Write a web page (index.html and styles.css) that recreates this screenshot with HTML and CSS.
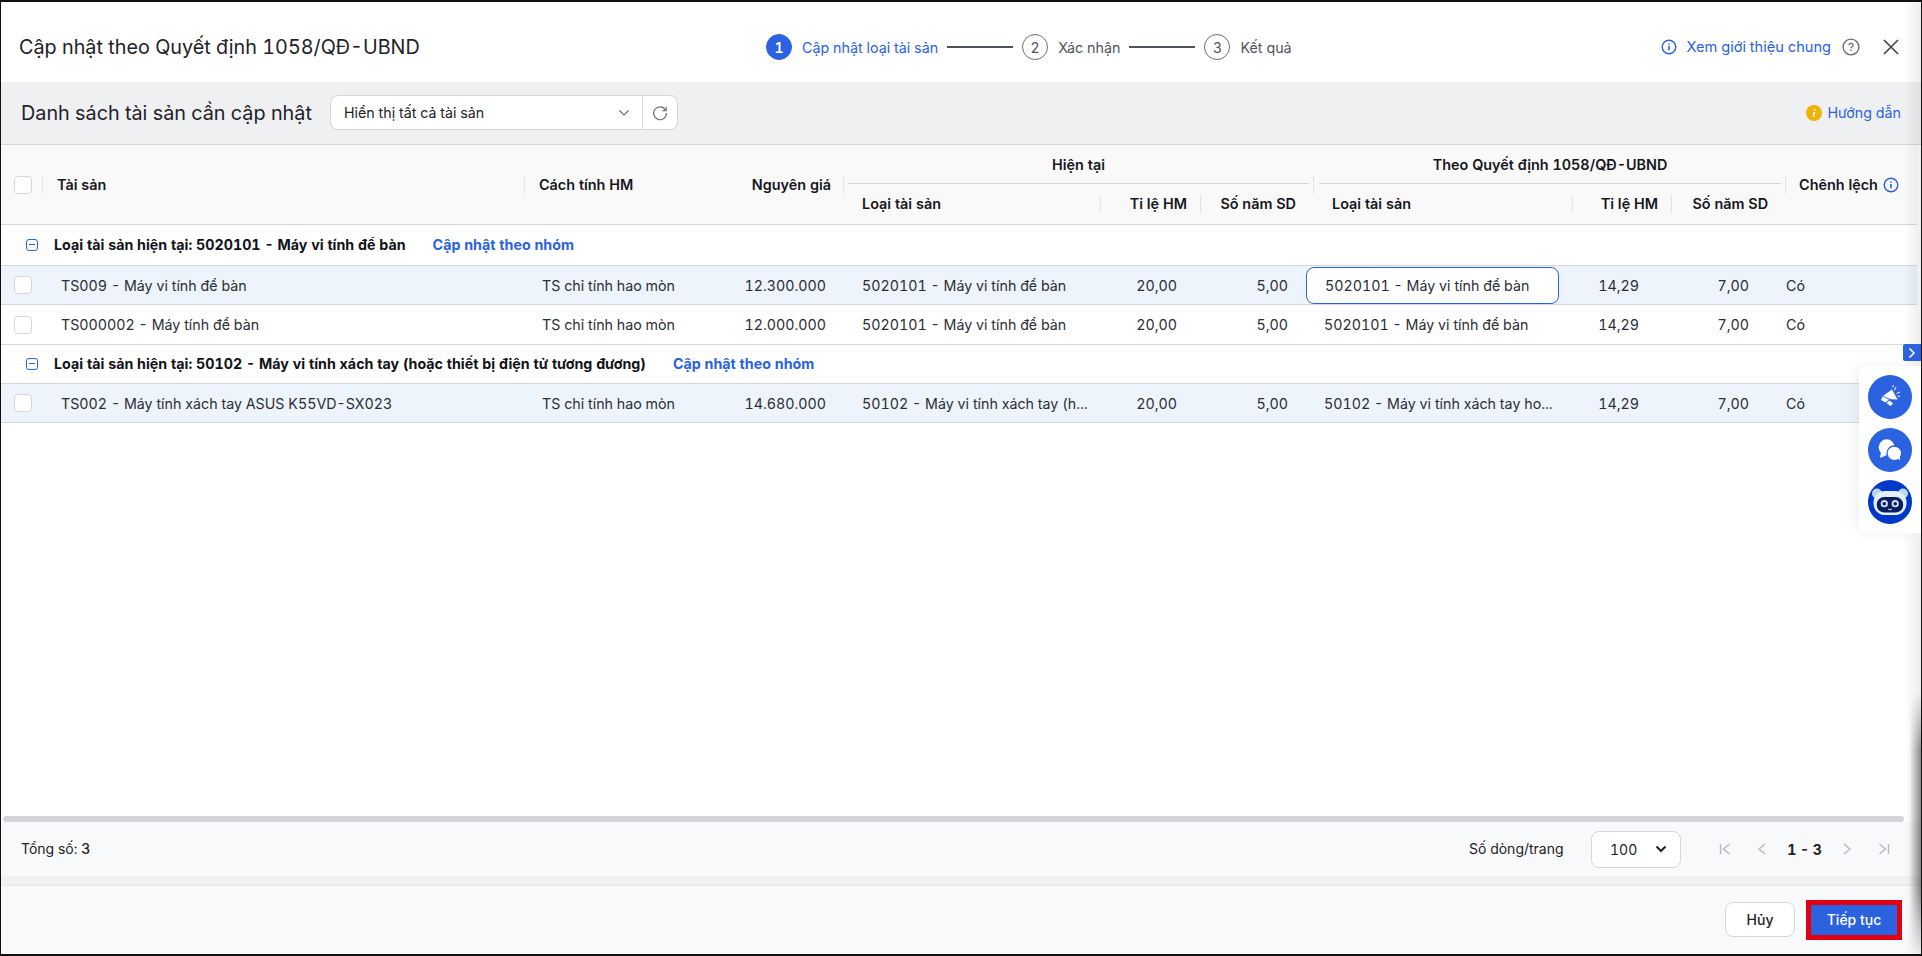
FILE: index.html
```html
<!DOCTYPE html>
<html lang="vi">

<head>
    <meta charset="UTF-8">
    <meta name="viewport" content="width=device-width, initial-scale=1.0">
    <title>Cập nhật theo Quyết định 1058/QĐ-UBND</title>
    <link rel="stylesheet" href="styles.css">
</head>

<body>
    <div id="dialog">
        <header class="top-bar">
            <h1>Cập nhật theo Quyết định 1058/QĐ-UBND</h1>
            <div class="steps">
                <span class="step-num active">1</span>
                <span class="step-name active">Cập nhật loại tài sản</span>
                <span class="step-line"></span>
                <span class="step-num">2</span>
                <span class="step-name">Xác nhận</span>
                <span class="step-line"></span>
                <span class="step-num">3</span>
                <span class="step-name">Kết quả</span>
            </div>
            <div class="top-links">
                <svg class="ico-info" viewBox="0 0 16 16" width="16" height="16"><circle cx="8" cy="8" r="6.8" fill="none" stroke="#2a62e0" stroke-width="1.4"/><path d="M8 7v4.2M8 4.4v1.3" stroke="#2a62e0" stroke-width="1.6"/></svg>
                <a class="link">Xem giới thiệu chung</a>
                <svg class="ico-help" viewBox="0 0 18 18" width="18" height="18"><circle cx="9" cy="9" r="7.9" fill="none" stroke="#6b7078" stroke-width="1.4"/><path d="M6.9 7.3c0-1.3 1-2 2.1-2s2.1.7 2.1 1.9c0 1.5-2.1 1.6-2.1 3" fill="none" stroke="#6b7078" stroke-width="1.3"/><path d="M9 11.6v1.4" stroke="#6b7078" stroke-width="1.4"/></svg>
                <svg class="ico-close" viewBox="0 0 16 16" width="16" height="16"><path d="M1 1l14 14M15 1L1 15" stroke="#43474e" stroke-width="1.7"/></svg>
            </div>
        </header>

        <div class="toolbar">
            <h2>Danh sách tài sản cần cập nhật</h2>
            <div class="filter">
                <span class="filter-text">Hiển thị tất cả tài sản</span>
                <svg viewBox="0 0 12 8" width="12" height="8"><path d="M1.5 1.5L6 6l4.5-4.5" fill="none" stroke="#6b7078" stroke-width="1.2"/></svg>
                <span class="filter-reload">
                    <svg viewBox="0 0 18 18" width="18" height="18"><path d="M14.6 6.2A6.4 6.4 0 1 0 15.4 9" fill="none" stroke="#6b7078" stroke-width="1.2"/><path d="M15.2 2.8v3.8h-3.8" fill="none" stroke="#6b7078" stroke-width="1.2"/></svg>
                </span>
            </div>
            <div class="guide">
                <svg viewBox="0 0 16 16" width="16" height="16"><circle cx="8" cy="8" r="8" fill="#eeb308"/><path d="M8.4 7l-.8 4.6M8.7 4v1.6" stroke="#fff" stroke-width="1.6"/></svg>
                <a class="link">Hướng dẫn</a>
            </div>
        </div>

        <div class="table-wrap">
            <table>
                <colgroup>
                    <col class="c-check"><col class="c-name"><col class="c-method"><col class="c-price">
                    <col class="c-type1"><col class="c-rate1"><col class="c-year1">
                    <col class="c-type2"><col class="c-rate2"><col class="c-year2"><col class="c-diff">
                </colgroup>
                <thead>
                    <tr class="head-1">
                        <th rowspan="2" class="th-check"><span class="check"></span></th>
                        <th rowspan="2" class="th-name"><span class="th-mid">Tài sản</span></th>
                        <th rowspan="2" class="th-method"><span class="th-mid">Cách tính HM</span></th>
                        <th rowspan="2" class="th-price"><span class="th-mid">Nguyên giá</span></th>
                        <th colspan="3" class="th-group"><span>Hiện tại</span></th>
                        <th colspan="3" class="th-group th-group-2"><span>Theo Quyết định 1058/QĐ-UBND</span></th>
                        <th rowspan="2" class="th-diff"><span class="th-mid">Chênh lệch
                            <svg viewBox="0 0 16 16" width="16" height="16"><circle cx="8" cy="8" r="6.8" fill="none" stroke="#2a62e0" stroke-width="1.4"/><path d="M8 7v4.2M8 4.4v1.3" stroke="#2a62e0" stroke-width="1.6"/></svg>
                        </span></th>
                    </tr>
                    <tr class="head-2">
                        <th class="th-type1"><span>Loại tài sản</span></th>
                        <th class="num"><span>Tỉ lệ HM</span></th>
                        <th class="num num-year"><span>Số năm SD</span></th>
                        <th class="th-type2"><span>Loại tài sản</span></th>
                        <th class="num"><span>Tỉ lệ HM</span></th>
                        <th class="num num-year"><span>Số năm SD</span></th>
                    </tr>
                </thead>
                <tbody>
                    <tr class="group">
                        <td colspan="11">
                            <span class="minus"></span><b>Loại tài sản hiện tại: 5020101 - Máy vi tính để bàn</b><a class="link group-link">Cập nhật theo nhóm</a>
                        </td>
                    </tr>
                    <tr class="row selected">
                        <td class="td-check"><span class="check"></span></td>
                        <td class="td-name">TS009 - Máy vi tính để bàn</td>
                        <td class="td-method">TS chỉ tính hao mòn</td>
                        <td class="td-price">12.300.000</td>
                        <td class="td-type1">5020101 - Máy vi tính để bàn</td>
                        <td class="td-rate1">20,00</td>
                        <td class="td-year1">5,00</td>
                        <td class="td-type2"><div class="cell-input">5020101 - Máy vi tính để bàn</div></td>
                        <td class="td-rate2">14,29</td>
                        <td class="td-year2">7,00</td>
                        <td class="td-diff">Có</td>
                    </tr>
                    <tr class="row row-tall">
                        <td class="td-check"><span class="check"></span></td>
                        <td class="td-name">TS000002 - Máy tính để bàn</td>
                        <td class="td-method">TS chỉ tính hao mòn</td>
                        <td class="td-price">12.000.000</td>
                        <td class="td-type1">5020101 - Máy vi tính để bàn</td>
                        <td class="td-rate1">20,00</td>
                        <td class="td-year1">5,00</td>
                        <td class="td-type2">5020101 - Máy vi tính để bàn</td>
                        <td class="td-rate2">14,29</td>
                        <td class="td-year2">7,00</td>
                        <td class="td-diff">Có</td>
                    </tr>
                    <tr class="group group-2">
                        <td colspan="11">
                            <span class="minus"></span><b>Loại tài sản hiện tại: 50102 - Máy vi tính xách tay (hoặc thiết bị điện tử tương đương)</b><a class="link group-link">Cập nhật theo nhóm</a>
                        </td>
                    </tr>
                    <tr class="row selected">
                        <td class="td-check"><span class="check"></span></td>
                        <td class="td-name">TS002 - Máy tính xách tay ASUS K55VD-SX023</td>
                        <td class="td-method">TS chỉ tính hao mòn</td>
                        <td class="td-price">14.680.000</td>
                        <td class="td-type1">50102 - Máy vi tính xách tay (h...</td>
                        <td class="td-rate1">20,00</td>
                        <td class="td-year1">5,00</td>
                        <td class="td-type2">50102 - Máy vi tính xách tay ho...</td>
                        <td class="td-rate2">14,29</td>
                        <td class="td-year2">7,00</td>
                        <td class="td-diff">Có</td>
                    </tr>
                </tbody>
            </table>
            <div class="scrollbar"></div>
        </div>

        <div class="pager-bar">
            <div class="total">Tổng số: <span>3</span></div>
            <div class="per-page">Số dòng/trang</div>
            <div class="page-select">100
                <svg viewBox="0 0 12 8" width="12" height="8"><path d="M1.5 1.5L6 6l4.5-4.5" fill="none" stroke="#1f2229" stroke-width="2"/></svg>
            </div>
            <div class="pager">
                <svg viewBox="0 0 12 14" width="12" height="14"><path d="M1.5 2v10M10.5 2l-6 5 6 5" fill="none" stroke="#b5b9c0" stroke-width="1.4"/></svg>
                <svg viewBox="0 0 12 14" width="12" height="14"><path d="M9 2L3 7l6 5" fill="none" stroke="#b5b9c0" stroke-width="1.4"/></svg>
                <b>1 - 3</b>
                <svg viewBox="0 0 12 14" width="12" height="14"><path d="M3 2l6 5-6 5" fill="none" stroke="#b5b9c0" stroke-width="1.4"/></svg>
                <svg viewBox="0 0 12 14" width="12" height="14"><path d="M10.5 2v10M1.5 2l6 5-6 5" fill="none" stroke="#b5b9c0" stroke-width="1.4"/></svg>
            </div>
        </div>

        <footer class="actions">
            <button class="btn-cancel">Hủy</button>
            <button class="btn-next">Tiếp tục</button>
        </footer>

        <div class="edge-shadow"></div>
        <div class="edge-dark"></div>

        <div class="side-toggle">
            <svg viewBox="0 0 10 12" width="10" height="12"><path d="M2.5 1.5L7 6l-4.5 4.5" fill="none" stroke="#fff" stroke-width="1.6"/></svg>
        </div>
        <div class="side-panel">
            <span class="side-btn">
                <svg viewBox="0 0 44 44" width="44" height="44">
                    <path d="M24 14.500L29.500 24.500 23 24.300 15 21z" fill="#fff"/>
                    <path d="M14.500 21.500l6.500 3-3.500 3-4.500-2.500z" fill="#fff"/>
                    <path d="M18.500 28l3-2.500 3.500 3-2.500 2.500z" fill="#fff"/>
                    <path d="M26.500 15.500l1.500-3.500M28.500 18.500l3.500-1.500M25 12.500l.3-2.500M29.500 21l2.500.3" stroke="#fff" stroke-width="1"/>
                </svg>
            </span>
            <span class="side-btn">
                <svg viewBox="0 0 44 44" width="44" height="44">
                    <circle cx="18.700" cy="19.300" r="8" fill="#fff"/>
                    <path d="M13 24l-1 6 6-2.500z" fill="#fff"/>
                    <circle cx="26.300" cy="25.300" r="7.300" fill="#fff" stroke="#2a62e0" stroke-width="1.300"/>
                    <path d="M29 30l3 2.500-.4-5z" fill="#fff"/>
                </svg>
            </span>
            <span class="side-btn robot">
                <svg viewBox="0 0 44 44" width="44" height="44">
                    <circle cx="9" cy="13.500" r="5" fill="#bcd6f2"/>
                    <circle cx="35" cy="13.500" r="5" fill="#bcd6f2"/>
                    <rect x="5.500" y="11" width="33" height="24" rx="11.500" fill="#e4eefb"/>
                    <rect x="8.700" y="17" width="26.500" height="15.500" rx="7.700" fill="#0b1c63"/>
                    <circle cx="16.300" cy="23.700" r="3.600" fill="#cfe0f5"/>
                    <circle cx="27.200" cy="23.700" r="3.600" fill="#cfe0f5"/>
                    <circle cx="16.300" cy="23.700" r="1.800" fill="#0b1c63"/>
                    <circle cx="27.200" cy="23.700" r="1.800" fill="#0b1c63"/>
                    <path d="M20 29q2 1.500 4 0" fill="none" stroke="#cfe0f5" stroke-width="1"/>
                </svg>
            </span>
        </div>
    </div>
</body>

</html>
```

FILE: styles.css
```css
* {
    padding: 0;
    margin: 0;
    box-sizing: border-box;
}

html,
body {
    height: 100%;
    overflow: hidden;
}

body {
    font-family: Inter, "Noto Sans", sans-serif;
    font-size: 14px;
    font-variant-numeric: tabular-nums;
    color: #1f2229;
    background-color: #fff;
}

.link {
    color: #2a62e0;
}

#dialog {
    position: relative;
    display: flex;
    flex-direction: column;
    height: 956px;
    border-top: 2px solid #111;
    border-left: 1px solid #111;
    border-right: 1px solid #111;
    border-bottom: 2px solid #111;
    overflow: hidden;
}

/* top bar */
.top-bar {
    display: flex;
    align-items: center;
    height: 80px;
    padding: 10px 22px 0 18px;
    flex-shrink: 0;
}

h1 {
    width: 747px;
    font-size: 19.8px;
    font-weight: 400;
}

.steps {
    display: flex;
    align-items: center;
}

.step-num {
    display: flex;
    justify-content: center;
    align-items: center;
    width: 26px;
    height: 26px;
    border: 1px solid #6b7078;
    border-radius: 50%;
    color: #50545c;
    font-size: 14px;
}

.step-num.active {
    background-color: #2a62e0;
    border-color: #2a62e0;
    color: #fff;
    font-weight: 600;
}

.step-name {
    margin-left: 10px;
    color: #50545c;
    font-size: 14.3px;
}

.step-name.active {
    color: #2a62e0;
}

.step-line {
    width: 66px;
    height: 2px;
    margin: 0 9px;
    background-color: #50545c;
}

.top-links {
    display: flex;
    align-items: center;
    margin-left: auto;
}

.top-links .link {
    margin-left: 9px;
    font-size: 14.6px;
}

.ico-help {
    margin-left: 11px;
}

.ico-close {
    margin-left: 23px;
}

/* toolbar */
.toolbar {
    display: flex;
    align-items: center;
    height: 63px;
    padding: 0 20px 1px 20px;
    background-color: #eff0f2;
    border-bottom: 1px solid #d5d7db;
    flex-shrink: 0;
}

h2 {
    width: 309px;
    font-size: 19.8px;
    font-weight: 400;
}

.filter {
    display: flex;
    align-items: center;
    width: 348px;
    height: 35px;
    padding-left: 13px;
    background-color: #fff;
    border: 1px solid #d5d7db;
    border-radius: 8px;
    font-size: 14.25px;
}

.filter-text {
    width: 274px;
}

.filter-reload {
    display: flex;
    justify-content: center;
    align-items: center;
    width: 35px;
    height: 33px;
    margin-left: 12px;
    border-left: 1px solid #d5d7db;
}

.guide {
    display: flex;
    align-items: center;
    gap: 5px;
    margin-left: auto;
    font-size: 14.25px;
}

/* table */
.table-wrap {
    flex: 1;
    position: relative;
    background-color: #fff;
}

table {
    width: 1916px;
    table-layout: fixed;
    border-collapse: separate;
    border-spacing: 0;
}

.c-check { width: 41px; }
.c-name { width: 482px; }
.c-method { width: 176px; }
.c-price { width: 144px; }
.c-type1 { width: 256px; }
.c-rate1 { width: 100px; }
.c-year1 { width: 113px; }
.c-type2 { width: 259px; }
.c-rate2 { width: 99px; }
.c-year2 { width: 114px; }
.c-diff { width: 132px; }

thead {
    background-color: #f9f9fa;
}

th {
    position: relative;
    font-size: 14.4px;
    font-weight: 600;
    text-align: left;
    color: #15171c;
}

.head-1 {
    height: 39px;
}

.head-2 {
    height: 41px;
}

.th-check {
    padding-left: 13px;
}

.th-name .th-mid,
.th-method .th-mid,
.th-diff .th-mid {
    display: flex;
    align-items: center;
    height: 18px;
    border-left: 1px solid #e3e4e7;
    padding-left: 14px;
}

.th-price .th-mid {
    display: block;
    height: 18px;
    padding-right: 12px;
    line-height: 18px;
    text-align: right;
    border-right: 1px solid #e3e4e7;
}

.th-diff .th-mid {
    padding-left: 13px;
}

.th-diff svg {
    margin-left: 5px;
    flex-shrink: 0;
}

.th-group {
    text-align: center;
    vertical-align: bottom;
    padding: 0 4px;
}

.th-group-2 {
    padding-left: 6px;
}

.th-group-2::before {
    content: "";
    position: absolute;
    left: 0;
    top: 31px;
    width: 1px;
    height: 18px;
    background-color: #e3e4e7;
}

.th-group span {
    display: block;
    padding-bottom: 10px;
    border-bottom: 1px solid #d5d7db;
}

.head-2 th span {
    display: block;
    line-height: 18px;
}

.th-type1 {
    padding-left: 18px;
}

.th-type2 {
    padding-left: 19px;
}

.head-2 .num {
    text-align: right;
}

.head-2 .num span {
    border-left: 1px solid #e3e4e7;
    padding-right: 13px;
}

.head-2 .num-year span {
    padding-right: 17px;
}

.head-2 th,
.head-1 th[rowspan] {
    border-bottom: 1px solid #d5d7db;
}

.check {
    display: block;
    width: 18px;
    height: 18px;
    background-color: #fff;
    border: 1px solid #d5d7db;
    border-radius: 4px;
}

tbody td {
    border-bottom: 1px solid #d5d7db;
    white-space: nowrap;
    font-size: 14.25px;
    color: #2b2e35;
}

.group {
    height: 41px;
}

.group-2 {
    height: 39px;
}

.group td {
    padding: 0 0 2px 25px;
}

.group b {
    font-size: 14.25px;
    font-weight: 700;
    color: #111318;
}

.minus {
    display: inline-block;
    position: relative;
    width: 12px;
    height: 12px;
    margin-right: 16px;
    border: 1px solid #2a62e0;
    border-radius: 3px;
    vertical-align: -1px;
}

.minus::after {
    content: "";
    position: absolute;
    left: 2px;
    right: 2px;
    top: 4px;
    height: 1px;
    background-color: #2a62e0;
}

.group-link {
    margin-left: 27px;
    font-size: 14.25px;
    font-weight: 700;
}

.row {
    height: 39px;
}

.row-tall {
    height: 40px;
}

.row.selected {
    background-color: #edf4fc;
}

.td-check {
    padding-left: 13px;
}

.td-name {
    padding-left: 19px;
}

.td-method {
    padding-left: 18px;
}

.td-price {
    padding-right: 18px;
    text-align: right;
}

.td-type1 {
    padding-left: 18px;
}

.td-rate1,
.td-rate2,
.td-year1,
.td-year2 {
    text-align: right;
}

.td-rate1 { padding-right: 23px; }
.td-year1 { padding-right: 25px; }
.td-rate2 { padding-right: 32px; }
.td-year2 { padding-right: 36px; }

.td-type2 {
    padding-left: 11px;
}

.td-diff {
    padding-left: 1px;
}

.cell-input {
    display: flex;
    align-items: center;
    width: 253px;
    height: 37px;
    margin-left: -18px;
    padding-left: 18px;
    background-color: #fff;
    border: 1px solid #2a62e0;
    border-radius: 8px;
}

.scrollbar {
    position: absolute;
    left: 2px;
    right: 17px;
    bottom: 0;
    height: 6px;
    background-color: #d3d5d9;
    border-radius: 3px;
}

/* footer */
.pager-bar {
    display: flex;
    align-items: center;
    height: 54px;
    padding-left: 20px;
    background-color: #f8f9fb;
    flex-shrink: 0;
}

.total {
    width: 1448px;
    padding-bottom: 2px;
    font-size: 14px;
}

.total span {
    font-weight: 500;
}

.per-page {
    width: 122px;
    padding-bottom: 2px;
    font-size: 14px;
}

.page-select {
    display: flex;
    align-items: center;
    justify-content: space-between;
    width: 90px;
    height: 37px;
    padding: 0 13px 0 18px;
    background-color: #fff;
    border: 1px solid #d5d7db;
    border-radius: 8px;
    font-size: 14px;
}

.pager {
    display: flex;
    align-items: center;
    margin-left: 38px;
    gap: 25px;
}

.pager b {
    width: 35px;
    margin: 0 -6px;
    font-size: 14px;
    font-weight: 700;
    text-align: center;
    white-space: nowrap;
}

.actions {
    display: flex;
    justify-content: flex-end;
    align-items: center;
    gap: 11px;
    height: 78px;
    padding-right: 19px;
    background-color: #f9fafb;
    border-top: 9px solid #f0f1f3;
    box-shadow: inset 0 1px 0 #e6e7ea;
    flex-shrink: 0;
}

.btn-cancel {
    width: 70px;
    height: 35px;
    background-color: #fff;
    border: 1px solid #d5d7db;
    border-radius: 8px;
    font: 500 14px Inter, sans-serif;
    color: #1f2229;
}

.btn-next {
    width: 96px;
    height: 40px;
    background-color: #2a62e0;
    border: 5px solid #e00010;
    font: 500 14px Inter, sans-serif;
    color: #fff;
}

/* right edge and side widget */
.edge-shadow {
    position: absolute;
    top: 0;
    right: 0;
    bottom: 0;
    width: 18px;
    background: linear-gradient(to right, rgba(0, 0, 0, 0), rgba(0, 0, 0, .07));
}

.edge-dark {
    position: absolute;
    top: 690px;
    right: 0;
    bottom: 0;
    width: 12px;
    background: linear-gradient(to right, rgba(0, 0, 0, 0), rgba(0, 0, 0, .42));
    -webkit-mask-image: linear-gradient(to bottom, transparent, #000 60px, #000 200px, transparent);
}

.side-toggle {
    position: absolute;
    right: 0;
    top: 342px;
    display: flex;
    justify-content: center;
    align-items: center;
    width: 18px;
    height: 17px;
    background-color: #2a62e0;
    border-radius: 2px 0 0 2px;
}

.side-panel {
    position: absolute;
    right: 0;
    top: 364px;
    display: flex;
    flex-direction: column;
    align-items: center;
    gap: 8.5px;
    width: 62px;
    height: 167px;
    padding-top: 9px;
    background-color: #fff;
    border-radius: 8px 0 0 8px;
    box-shadow: -4px 0 14px rgba(0, 0, 0, .06);
}

.side-btn {
    display: flex;
    justify-content: center;
    align-items: center;
    width: 44px;
    height: 44px;
    background-color: #2a62e0;
    border-radius: 50%;
}

.side-btn.robot {
    background-color: #0039c8;
}
```
